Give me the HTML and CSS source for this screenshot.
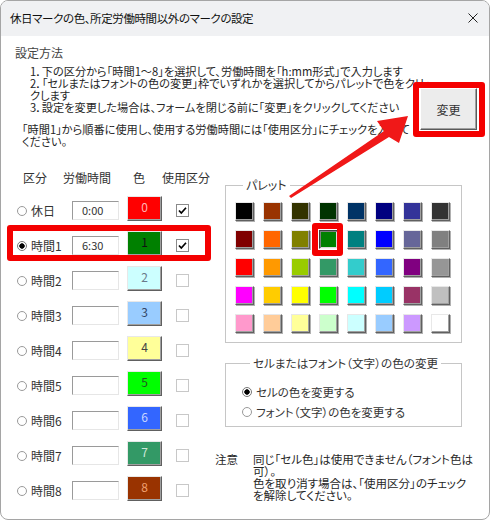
FILE: index.html
```html
<!DOCTYPE html>
<html lang="ja">
<head>
<meta charset="utf-8">
<title>休日マークの色</title>
<link rel="stylesheet" href="styles.css">
</head>
<body>
<div class="window">
  <div class="titlebar">
    <span class="title">休日マークの色、所定労働時間以外のマークの設定</span>
    <svg class="close" width="10" height="10" viewBox="0 0 10 10"><path d="M0.5 0.5L9.5 9.5M9.5 0.5L0.5 9.5" stroke="#222" stroke-width="1" fill="none"/></svg>
  </div>
  <div class="content">
    <div class="top">
      <div class="howto">
        <div class="howto-title">設定方法</div>
        <div class="steps">1．下の区分から「時間1～8」を選択して、労働時間を「h:mm形式」で入力します<br>2．「セルまたはフォントの色の変更」枠でいずれかを選択してからパレットで色をクリッ<br>クします<br>3．設定を変更した場合は、フォームを閉じる前に「変更」をクリックしてください</div>
        <div class="usage">「時間1」から順番に使用し、使用する労働時間には「使用区分」にチェックを入れて<br>ください。</div>
      </div>
      <button class="btn">変更</button>
    </div>
    <div class="main">
      <div class="left">
        <div class="hdr"><span>区分</span><span>労働時間</span><span>色</span><span>使用区分</span></div>
        <div class="row"><span class="lbl"><span class="radio"></span>休日</span><span class="time">0:00</span><span class="cbox" style="background:#ff0000;color:#ffb3b3">0</span><span class="check on"><svg width="9" height="9" viewBox="0 0 9 9"><path d="M1 4.5L3.3 7L8 1.8" stroke="#000" stroke-width="1.7" fill="none"/></svg></span></div>
        <div class="row"><span class="lbl"><span class="radio on"></span>時間1</span><span class="time">6:30</span><span class="cbox" style="background:#008000;color:#111">1</span><span class="check on"><svg width="9" height="9" viewBox="0 0 9 9"><path d="M1 4.5L3.3 7L8 1.8" stroke="#000" stroke-width="1.7" fill="none"/></svg></span></div>
        <div class="row"><span class="lbl"><span class="radio"></span>時間2</span><span class="time"></span><span class="cbox" style="background:#ccffff;color:#6b7a8a">2</span><span class="check"></span></div>
        <div class="row"><span class="lbl"><span class="radio"></span>時間3</span><span class="time"></span><span class="cbox" style="background:#99ccff;color:#334466">3</span><span class="check"></span></div>
        <div class="row"><span class="lbl"><span class="radio"></span>時間4</span><span class="time"></span><span class="cbox" style="background:#ffff99;color:#444">4</span><span class="check"></span></div>
        <div class="row"><span class="lbl"><span class="radio"></span>時間5</span><span class="time"></span><span class="cbox" style="background:#00ff00;color:#225522">5</span><span class="check"></span></div>
        <div class="row"><span class="lbl"><span class="radio"></span>時間6</span><span class="time"></span><span class="cbox" style="background:#3366ff;color:#c8d6ff">6</span><span class="check"></span></div>
        <div class="row"><span class="lbl"><span class="radio"></span>時間7</span><span class="time"></span><span class="cbox" style="background:#339966;color:#cfe8da">7</span><span class="check"></span></div>
        <div class="row"><span class="lbl"><span class="radio"></span>時間8</span><span class="time"></span><span class="cbox" style="background:#993300;color:#f0a070">8</span><span class="check"></span></div>
      </div>
      <div class="right">
        <fieldset class="group palette">
          <legend>パレット</legend>
          <div class="grid">
            <span class="sw" style="background:#000000"></span><span class="sw" style="background:#993300"></span><span class="sw" style="background:#333300"></span><span class="sw" style="background:#003300"></span><span class="sw" style="background:#003366"></span><span class="sw" style="background:#000080"></span><span class="sw" style="background:#333399"></span><span class="sw" style="background:#333333"></span>
            <span class="sw" style="background:#800000"></span><span class="sw" style="background:#ff6600"></span><span class="sw" style="background:#808000"></span><span class="sw sel" style="background:#008000"></span><span class="sw" style="background:#008080"></span><span class="sw" style="background:#0000ff"></span><span class="sw" style="background:#666699"></span><span class="sw" style="background:#808080"></span>
            <span class="sw" style="background:#ff0000"></span><span class="sw" style="background:#ff9900"></span><span class="sw" style="background:#99cc00"></span><span class="sw" style="background:#339966"></span><span class="sw" style="background:#33cccc"></span><span class="sw" style="background:#3366ff"></span><span class="sw" style="background:#800080"></span><span class="sw" style="background:#969696"></span>
            <span class="sw" style="background:#ff00ff"></span><span class="sw" style="background:#ffcc00"></span><span class="sw" style="background:#ffff00"></span><span class="sw" style="background:#00ff00"></span><span class="sw" style="background:#00ffff"></span><span class="sw" style="background:#00ccff"></span><span class="sw" style="background:#993366"></span><span class="sw" style="background:#c0c0c0"></span>
            <span class="sw" style="background:#ff99cc"></span><span class="sw" style="background:#ffcc99"></span><span class="sw" style="background:#ffff99"></span><span class="sw" style="background:#ccffcc"></span><span class="sw" style="background:#ccffff"></span><span class="sw" style="background:#99ccff"></span><span class="sw" style="background:#cc99ff"></span><span class="sw" style="background:#ffffff"></span>
          </div>
        </fieldset>
        <fieldset class="group mode">
          <legend>セルまたはフォント（文字）の色の変更</legend>
          <div class="opt"><span class="radio on"></span>セルの色を変更する</div>
          <div class="opt"><span class="radio"></span>フォント（文字）の色を変更する</div>
        </fieldset>
        <div class="caution">
          <span class="c-h">注意</span>
          <span class="c-t">同じ「セル色」は使用できません（フォント色は<br>可）。<br>色を取り消す場合は、「使用区分」のチェック<br>を解除してください。</span>
        </div>
      </div>
    </div>
  </div>
  <svg class="arrow" width="490" height="520" viewBox="0 0 490 520"><polygon points="408,116 399,143 389,137 291,198 289,196 384,131 377,121" fill="#f01818"/></svg>
  <div class="hl hl-btn"></div>
  <div class="hl hl-row"></div>
  <div class="hl hl-sw"></div>
</div>
</body>
</html>
```

FILE: styles.css
```css
* { box-sizing: border-box; }
html, body { margin: 0; background: #fff; }
body {
  font-family: "Noto Sans CJK JP", "Noto Sans", sans-serif;
  font-size: 12px;
  color: #262626;
}
.window {
  position: relative;
  width: 490px;
  height: 520px;
  border: 1px solid #a5a5a5;
  border-radius: 8px;
  overflow: hidden;
  background: #fff;
}
.titlebar {
  height: 35px;
  background: #f0f1f3;
  display: flex;
  align-items: center;
  justify-content: space-between;
  padding: 0 11px 2px 9px;
}
.title {
  font-size: 11.5px;
  letter-spacing: -0.4px;
  color: #111;
  font-feature-settings: "palt";
  line-height: 16px;
}
.close { display: block; }
.content {
  padding: 10px 12px 0 14px;
}
.top { display: flex; }
.howto {
  flex: none;
  width: 405px;
  white-space: nowrap;
  font-feature-settings: "palt";
}
.howto-title { line-height: 14px; color: #444; }
.steps { margin-top: 5px; padding-left: 15px; line-height: 12px; font-size: 11.2px; }
.usage { margin-top: 10px; padding-left: 7px; line-height: 12px; font-size: 11.2px; }
.btn {
  flex: none;
  width: 57px;
  height: 42px;
  margin-top: 42px;
  background: #ececec;
  border: 1px solid;
  border-color: #fff #5a5a5a #5a5a5a #fff;
  box-shadow: inset -1px -1px 0 #a0a0a0;
  font-family: inherit;
  font-size: 12px;
  color: #333;
  padding: 0;
}
.main {
  display: flex;
  margin-top: 24px;
}
.left {
  width: 210px;
  flex: none;
  padding-left: 2px;
}
.hdr {
  display: grid;
  grid-template-columns: 40px 70px 29px auto;
  padding-left: 6px;
  line-height: 14px;
  margin-bottom: 8px;
  color: #333;
}
.row {
  height: 35px;
  display: flex;
  align-items: center;
}
.lbl {
  width: 55px;
  display: flex;
  align-items: center;
  gap: 4px;
  color: #333;
}
.radio {
  width: 10px;
  height: 10px;
  border-radius: 50%;
  border: 1px solid #9a9a9a;
  background: #fff;
  flex: none;
}
.radio.on {
  border-color: #777;
  background: radial-gradient(circle, #000 0 2.4px, #fff 3px);
}
.time {
  width: 47px;
  height: 19px;
  margin-right: 8px;
  border: 1px solid;
  border-color: #9a9a9a #e6e6e6 #e6e6e6 #9a9a9a;
  background: #fff;
  font-size: 11px;
  line-height: 17px;
  padding-left: 9px;
  color: #333;
}
.cbox {
  width: 35px;
  height: 25px;
  margin-bottom: 5px;
  margin-right: 14px;
  border: 1px solid;
  border-color: #e8e8e8 #606060 #606060 #e8e8e8;
  box-shadow: inset -1px -1px 0 #a0a0a0;
  text-align: center;
  line-height: 20px;
  font-size: 12px;
}
.check {
  width: 13px;
  height: 13px;
  border: 1px solid #c8c8c8;
  background: #fff;
  display: flex;
  align-items: center;
  justify-content: center;
}
.check.on { border-color: #8a8a8a; }
.check svg { display: block; }
.right {
  width: 237px;
  flex: none;
  margin-top: 7px;
}
.group {
  margin: 0;
  min-width: 0;
  width: 237px;
  border: 1px solid #c6c6c6;
}
.group legend {
  padding: 0 3px;
  margin-left: 8px;
  line-height: 14px;
  color: #333;
  font-feature-settings: "palt";
}
.mode legend { font-size: 11.6px; }
.palette { padding: 10px 11px 9px 9px; }
.grid {
  display: grid;
  grid-template-columns: repeat(8, 19px);
  grid-auto-rows: 19px;
  gap: 9px;
}
.sw {
  border: 1px solid;
  border-color: #e8e8e8 #606060 #606060 #e8e8e8;
  box-shadow: inset -1px -1px 0 #a0a0a0, 1px 1px 0 #b0b0b0;
}
.sw.sel {
  border-color: #404040 #f4f4f4 #f4f4f4 #404040;
  box-shadow: inset 1px 1px 0 #808080, inset -1px -1px 0 #dcdcdc;
}
.mode {
  margin-top: 13px;
  padding: 12px 8px 4px 16px;
}
.opt {
  height: 20px;
  display: flex;
  align-items: center;
  gap: 4px;
  color: #333;
  font-size: 11.5px;
  font-feature-settings: "palt";
}
.caution {
  display: flex;
  margin-top: 26px;
  margin-left: -10px;
  line-height: 12px;
  font-size: 11.5px;
  font-feature-settings: "palt";
  white-space: nowrap;
}
.c-h { width: 38px; flex: none; }
.arrow {
  position: absolute;
  left: -1px;
  top: -1px;
  pointer-events: none;
}
.hl {
  position: absolute;
  border: 6px solid #f40000;
  border-radius: 3px;
  pointer-events: none;
}
.hl-btn { left: 412px; top: 81px; width: 72px; height: 55px; }
.hl-row { left: 6px; top: 224px; width: 204px; height: 36px; }
.hl-sw { left: 311px; top: 222px; width: 31px; height: 33px; }
```
